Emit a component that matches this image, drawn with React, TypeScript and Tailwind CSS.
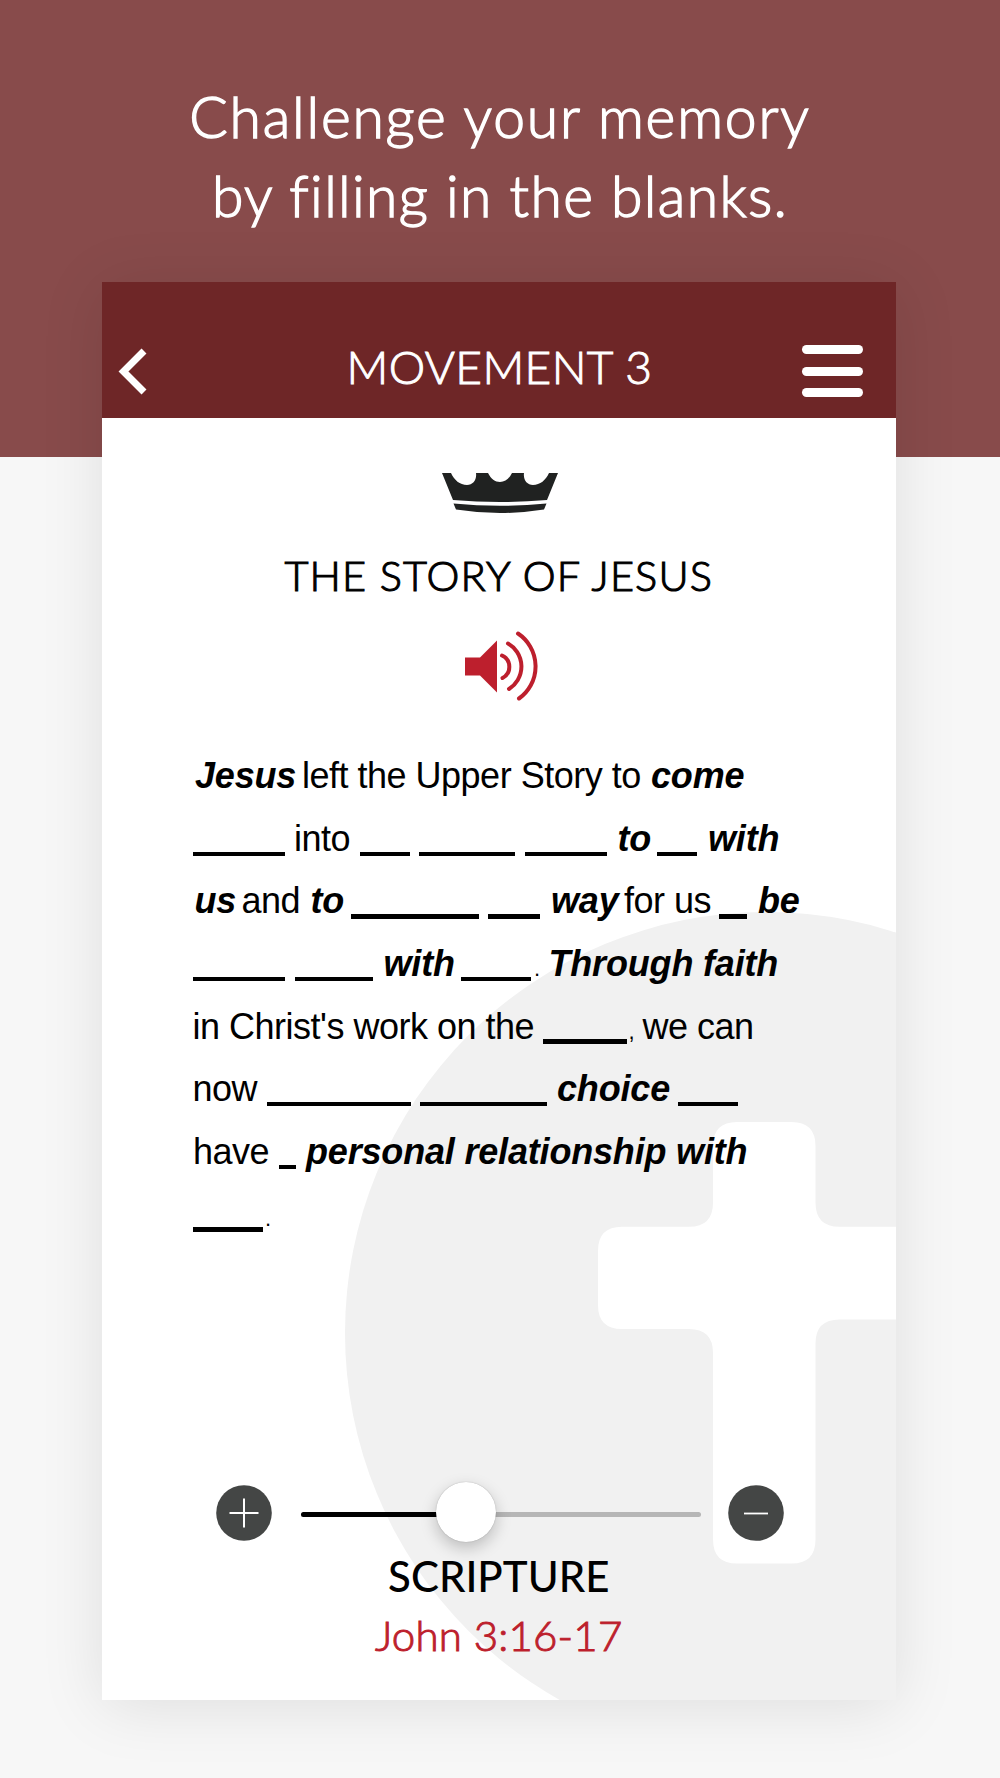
type Token = {
  x: number;
  end?: number;
  text?: string;
  kind?: 'strong' | 'mark';
};

const LEFT = 193;

// tokens without text are the blanks to fill in
const verse: Token[][] = [
  [
    { x: 195, text: 'Jesus', kind: 'strong' },
    { x: 302, text: 'left the Upper Story to' },
    { x: 651, text: 'come', kind: 'strong' },
  ],
  [
    { x: 193, end: 285 },
    { x: 294, text: 'into' },
    { x: 360, end: 409.5 },
    { x: 419, end: 515 },
    { x: 524.5, end: 606.5 },
    { x: 617.5, text: 'to', kind: 'strong' },
    { x: 657, end: 697 },
    { x: 708, text: 'with', kind: 'strong' },
  ],
  [
    { x: 194.5, text: 'us', kind: 'strong' },
    { x: 241.5, text: 'and' },
    { x: 310.5, text: 'to', kind: 'strong' },
    { x: 350.7, end: 479 },
    { x: 488.5, end: 540 },
    { x: 551, text: 'way', kind: 'strong' },
    { x: 624, text: 'for us' },
    { x: 719.5, end: 747 },
    { x: 758, text: 'be', kind: 'strong' },
  ],
  [
    { x: 193, end: 285 },
    { x: 294.5, end: 372.5 },
    { x: 383.5, text: 'with', kind: 'strong' },
    { x: 461, end: 531 },
    { x: 534, text: '.', kind: 'mark' },
    { x: 548.5, text: 'Through faith', kind: 'strong' },
  ],
  [
    { x: 192.5, text: "in Christ's work on the" },
    { x: 543, end: 626.5 },
    { x: 628.5, text: ',', kind: 'mark' },
    { x: 642.5, text: 'we can' },
  ],
  [
    { x: 192.5, text: 'now' },
    { x: 266.5, end: 410.5 },
    { x: 420, end: 546.5 },
    { x: 557, text: 'choice', kind: 'strong' },
    { x: 678, end: 738 },
  ],
  [
    { x: 193, text: 'have' },
    { x: 278.5, end: 296 },
    { x: 306, text: 'personal relationship with', kind: 'strong' },
  ],
  [
    { x: 193, end: 263 },
    { x: 265, text: '.', kind: 'mark' },
  ],
];

function VerseLine({ tokens }: { tokens: Token[] }) {
  return (
    <div className="flex h-[62.6px] whitespace-nowrap leading-[64.6px]">
      {tokens.map((t, i) => {
        const start = i === 0 ? t.x - LEFT : 0;
        const next = tokens[i + 1];
        const width = next ? next.x - t.x : 300;
        return (
          <span key={i} className="shrink-0" style={{ width, marginLeft: start }}>
            {t.end ? (
              <span className="mt-[44.8px] block h-[4.4px] bg-black" style={{ width: t.end - t.x }} />
            ) : t.kind === 'strong' ? (
              <b className="font-bold italic tracking-[-0.18px]">{t.text}</b>
            ) : t.kind === 'mark' ? (
              <span className="text-[22px]">{t.text}</span>
            ) : (
              <span className="tracking-[-0.5px]">{t.text}</span>
            )}
          </span>
        );
      })}
    </div>
  );
}

function Watermark() {
  return (
    <svg className="absolute inset-0" width="794" height="1282" viewBox="102 418 794 1282">
      <circle cx="766" cy="1333" r="421" fill="#f1f1f1" />
      <path
        fill="#fff"
        d="M737 1122h54.500q24 0 24 24v56.700q0 24 24 24H920v92.800h-80.500q-24 0-24 24v196q0 24-24 24H737q-24 0-24-24V1353q0-24-24-24h-67q-24 0-24-24v-54.300q0-24 24-24h67q24 0 24-24V1146q0-24 24-24z"
      />
    </svg>
  );
}

function Crown() {
  return (
    <svg className="ml-[340.500px] block" width="116" height="41" viewBox="0 0 116 41" fill="#202221">
      <path d="M0 0H9C12 7 18 12 25 12C31 12 35 7 34 0H46C49 6 53 9 58 9C63 9 67 6 70 0H82C81 7 85 12 91 12C98 12 104 7 107 0H116L105 27Q58 31 11 27Z" />
      <path d="M11.500 30.500Q58 35 104.500 30.500L102 36.500Q58 43.500 14 36.500Z" />
    </svg>
  );
}

function Speaker() {
  return (
    <svg className="ml-[363px] block" width="74" height="70" viewBox="0 0 74 70">
      <path d="M0 26.500H15L32 9.500V61.500L15 44.500H0Z" fill="#bd1f2d" />
      <g fill="none" stroke="#bd1f2d" strokeWidth="4" strokeLinecap="round">
        <path d="M37 24.500A12.500 12.500 0 0 1 37.500 47" />
        <path d="M43 12.500A26.500 26.500 0 0 1 44 58" />
        <path d="M53 2.500A39.500 39.500 0 0 1 54 67.500" />
      </g>
    </svg>
  );
}

export default function App() {
  return (
    <div className="relative h-[1778px] w-[1000px] overflow-hidden bg-[#f7f7f7] font-['Lato',sans-serif]">
      <div className="absolute inset-x-0 top-0 h-[456.500px] bg-[#884b4b]" />

      <div className="relative">
        <h1 className="h-[282px] pt-[76.600px] text-center text-[57px] font-light leading-[79px] text-white [-webkit-text-stroke:1.4px_#fff]">
          <span className="block tracking-[1.800px]">Challenge your memory</span>
          <span className="block tracking-[1.350px]">by filling in the blanks.</span>
        </h1>

        <main className="ml-[101.500px] h-[1418px] w-[794.500px] bg-white shadow-[0_6px_60px_rgba(0,0,0,0.1)]">
          <header className="flex h-[136px] items-start bg-[#6e2627]">
            <svg className="ml-[16px] mt-[66px]" width="46" height="47" viewBox="0 0 46 47">
              <path d="M26 3L5.500 23.500L26 44" fill="none" stroke="#fff" strokeWidth="7" />
            </svg>
            <h2 className="ml-[33.500px] mt-[54.500px] flex-1 text-center text-[46px] font-light leading-[60px] tracking-[0.400px] text-white [-webkit-text-stroke:1px_#fff]">
              MOVEMENT 3
            </h2>
            <div className="mr-[33.500px] mt-[63px] flex w-[60.500px] flex-col gap-[12.500px]">
              <span className="h-[9px] rounded-full bg-white" />
              <span className="h-[9px] rounded-full bg-white" />
              <span className="h-[9px] rounded-full bg-white" />
            </div>
          </header>

          <section className="relative h-[1282px] overflow-hidden pt-[55px] text-black">
            <Watermark />
            <div className="relative">
              <Crown />
              <h3 className="mt-[35.500px] h-[50px] text-center text-[41.500px] font-light leading-[50px] tracking-[1.150px] [-webkit-text-stroke:1.1px_#000]">
                THE STORY OF JESUS
              </h3>
              <div className="mt-[31.500px]">
                <Speaker />
              </div>

              <div className="ml-[91.500px] mt-[43.200px] h-[501px] font-['Liberation_Sans',Arial,sans-serif] text-[36px]">
                {verse.map((tokens, i) => (
                  <VerseLine key={i} tokens={tokens} />
                ))}
              </div>

              {/* Difficulty slider */}
              <div className="ml-[114.500px] mt-[237px] flex h-[61px] items-center">
                <svg width="56" height="56" viewBox="0 0 56 56">
                  <circle cx="28" cy="28" r="27.800" fill="#444645" />
                  <path d="M13.500 28H42.500M28 13.500V42.500" stroke="#fff" strokeWidth="2" />
                </svg>
                <div className="relative ml-[29px] mt-[4px] h-[5px] w-[400px] rounded-full bg-[#b6b6b6]">
                  <div className="h-full w-[150px] rounded-full bg-black" />
                  <div className="absolute left-[135px] top-[-30px] size-[60px] rounded-full bg-white shadow-[0_0_1px_rgba(0,0,0,0.35),0_6px_16px_rgba(0,0,0,0.22)]" />
                </div>
                <svg className="ml-[27px]" width="56" height="56" viewBox="0 0 56 56">
                  <circle cx="28" cy="28" r="27.800" fill="#444645" />
                  <path d="M16 28.500H40" stroke="#fff" strokeWidth="1.800" />
                </svg>
              </div>

              <p className="mt-[8px] h-[59px] text-center text-[42px] font-medium leading-[50px]">SCRIPTURE</p>
              <p className="text-center text-[42px] font-light leading-[50px] tracking-[0.200px] text-[#bd1f2d] [-webkit-text-stroke:1px_#bd1f2d]">
                John 3:16-17
              </p>
            </div>
          </section>
        </main>
      </div>
    </div>
  );
}
